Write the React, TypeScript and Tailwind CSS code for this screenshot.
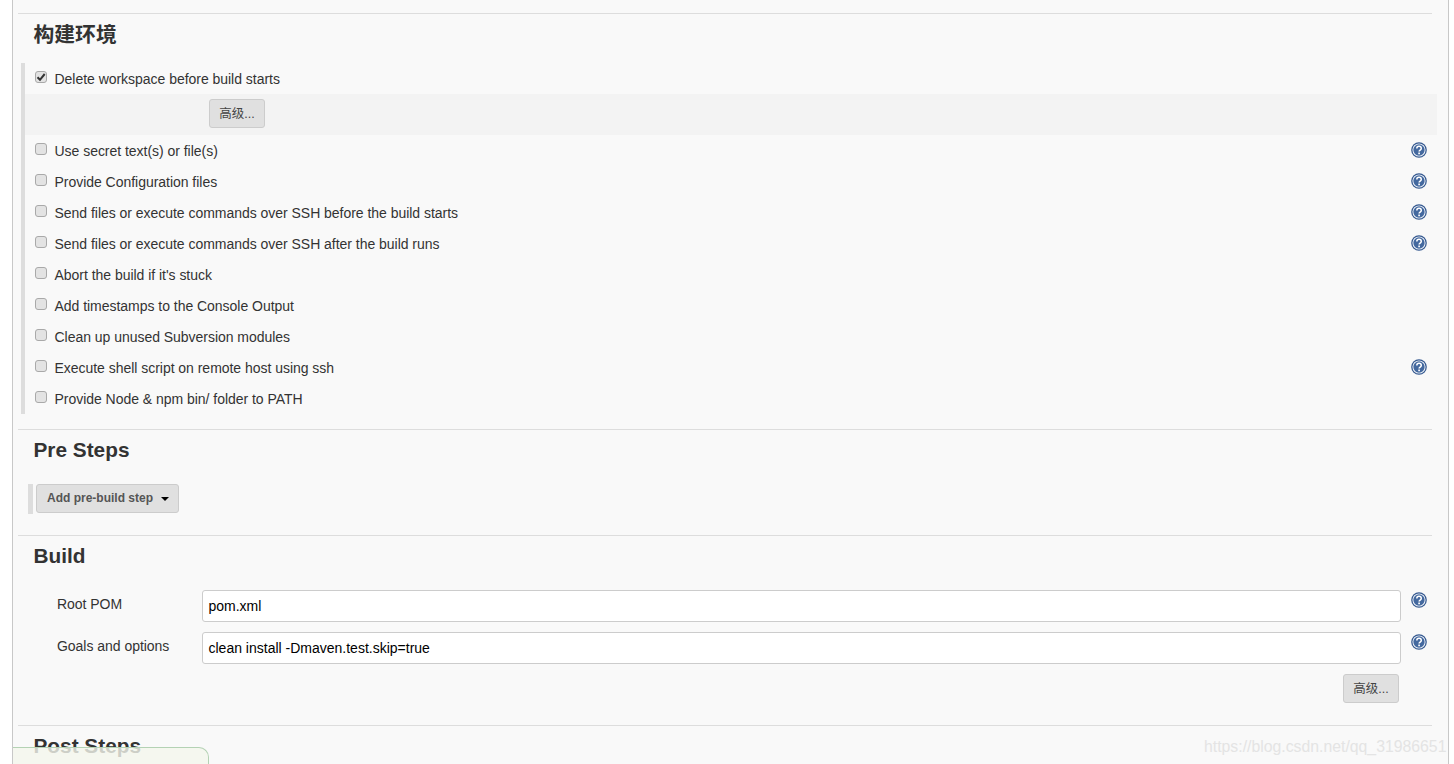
import React from 'react'

function HelpIcon() {
    return (
        <svg width="16" height="16" viewBox="0 0 17 17" className="shrink-0">
            <circle cx="8.5" cy="8.5" r="8.3" fill="#34588f" />
            <circle cx="8.5" cy="8.5" r="7" fill="#f2f5fa" />
            <circle cx="8.5" cy="8.5" r="6" fill="#44699f" />
            <path d="M6.2 6.8c0-3 4.7-3 4.7 0 0 1.8-2.3 1.7-2.3 3.4" fill="none" stroke="#fff" strokeWidth="1.6" />
            <rect x="7.7" y="11.2" width="1.8" height="1.8" fill="#fff" />
        </svg>
    )
}

function Checkbox({ checked }: { checked?: boolean }) {
    return (
        <div className="w-[12px] h-[12px] rounded-[3px] border border-[#a9a9a9] bg-[#e3e3e3] flex items-center justify-center shrink-0 mb-[4px]">
            {checked && (
                <svg width="10" height="10" viewBox="0 0 10 10" className="shrink-0">
                    <path d="M1.5 5.2 4 7.8 8.7 2" fill="none" stroke="#333" strokeWidth="2" />
                </svg>
            )}
        </div>
    )
}

function OptionRow({ label, help, checked }: { label: string; help?: boolean; checked?: boolean }) {
    return (
        <div className="h-[31px] flex items-center pl-[10px] pr-[10px]">
            <Checkbox checked={checked} />
            <div className="ml-[7.5px] mt-[2px] flex-1 text-[14px] tracking-[-0.03px] text-[#333]">{label}</div>
            {help && <div className="mb-[1px]"><HelpIcon /></div>}
        </div>
    )
}

function SectionTitle({ children }: { children: React.ReactNode }) {
    return <div className="h-[41px] pl-[15.5px] flex items-center text-[20.8px] font-bold text-[#333]">{children}</div>
}

function AdvancedButton() {
    return (
        <div className="w-[56px] h-[29px] flex items-center justify-center pt-[1px] rounded-[3px] border border-[#ccc] bg-[#e0e0e0] text-[12.5px] text-[#444]">
            高级...
        </div>
    )
}

export default function App() {
    return (
        <div className="h-screen overflow-hidden bg-white pl-3 relative font-['Liberation_Sans','Noto_Sans_CJK_SC',sans-serif]">
            <div className="w-[1437px] h-full border-x border-[#c8c8c8] bg-[#f9f9f9] pt-[13px]">
                {/* 构建环境 */}
                <div className="ml-[5px] mr-[16px] border-t border-[#ddd]">
                    <SectionTitle>构建环境</SectionTitle>
                    <div className="mt-[8px] ml-[3px] -mr-[5px] border-l-[4px] border-[#ddd]">
                        <OptionRow label="Delete workspace before build starts" checked />
                        <div className="h-[41px] bg-[#f3f3f3] pl-[184px] pt-[5px]">
                            <AdvancedButton />
                        </div>
                        <OptionRow label="Use secret text(s) or file(s)" help />
                        <OptionRow label="Provide Configuration files" help />
                        <OptionRow label="Send files or execute commands over SSH before the build starts" help />
                        <OptionRow label="Send files or execute commands over SSH after the build runs" help />
                        <OptionRow label="Abort the build if it's stuck" />
                        <OptionRow label="Add timestamps to the Console Output" />
                        <OptionRow label="Clean up unused Subversion modules" />
                        <OptionRow label="Execute shell script on remote host using ssh" help />
                        <OptionRow label="Provide Node & npm bin/ folder to PATH" />
                    </div>
                </div>

                {/* Pre Steps */}
                <div className="mt-[15px] ml-[5px] mr-[16px] border-t border-[#ddd]">
                    <SectionTitle><span className="mb-[2px]">Pre Steps</span></SectionTitle>
                    <div className="mt-[13px] ml-[10px] pl-[3px] border-l-[5px] border-[#ddd] h-[30px]">
                        <div className="w-[143px] h-[29px] flex items-center pl-[10px] pb-[1px] rounded-[3px] border border-[#ccc] bg-[#e0e0e0] text-[12px] font-bold text-[#555]">
                            Add pre-build step
                            <div className="ml-[8px] mt-[1px] w-0 h-0 border-x-[4px] border-x-transparent border-t-[4px] border-t-black" />
                        </div>
                    </div>
                </div>

                {/* Build */}
                <div className="mt-[21px] ml-[5px] mr-[16px] border-t border-[#ddd]">
                    <SectionTitle><span className="mb-[2px]">Build</span></SectionTitle>
                    <div className="mt-[13px] flex flex-col gap-[10px] pl-[39px]">
                        <div className="flex items-start">
                            <div className="w-[145px] pt-[4px] text-[14px] tracking-[-0.03px] text-[#333]">Root POM</div>
                            <div className="w-[1199px] h-[32px] rounded-[3px] border border-[#ccc] bg-white flex items-center pl-[5.5px] text-[14px] text-black">pom.xml</div>
                            <div className="ml-[10px] pt-[2px]"><HelpIcon /></div>
                        </div>
                        <div className="flex items-start">
                            <div className="w-[145px] pt-[4px] text-[14px] tracking-[-0.03px] text-[#333]">Goals and options</div>
                            <div className="w-[1199px] h-[32px] rounded-[3px] border border-[#ccc] bg-white flex items-center pl-[5.5px] text-[14px] text-black">clean install -Dmaven.test.skip=true</div>
                            <div className="ml-[10px] pt-[2px]"><HelpIcon /></div>
                        </div>
                    </div>
                    <div className="mt-[10px] pl-[1325px]">
                        <AdvancedButton />
                    </div>
                </div>

                {/* Post Steps */}
                <div className="mt-[22px] ml-[5px] mr-[16px] border-t border-[#ddd]">
                    <SectionTitle><span className="mb-[2px]">Post Steps</span></SectionTitle>
                </div>
            </div>

            {/* bottom sticker, over the heading */}
            <div className="absolute left-[13px] top-[747px] w-[196px] h-[30px] rounded-tr-[10px] border-t border-r border-[#b4d2b4] bg-[#f4f6ec]/80" />
            {/* watermark */}
            <div className="absolute left-[1204px] top-[737px] text-[15.8px] leading-[20px] whitespace-nowrap text-[#e4e4e4]">https://blog.csdn.net/qq_31986651</div>
        </div>
    )
}
